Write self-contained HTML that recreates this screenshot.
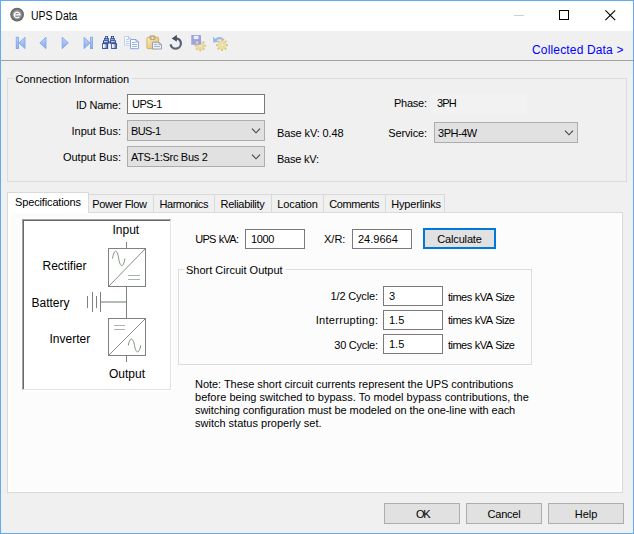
<!DOCTYPE html>
<html><head><meta charset="utf-8"><title>UPS Data</title>
<style>
*{box-sizing:border-box;margin:0;padding:0}
html,body{width:634px;height:534px;overflow:hidden;background:#f0f0f0}
body{position:relative;font-family:"Liberation Sans",sans-serif;font-size:11px;color:#000}
.abs{position:absolute}
.t{position:absolute;white-space:nowrap;line-height:13px;height:13px}
.r{text-align:right}
.inp{position:absolute;background:#fff;border:1px solid #7a7a7a;height:20px;line-height:18px;padding-left:5px;white-space:nowrap}
.cmb{position:absolute;background:#e1e1e1;border:1px solid #adadad;height:21px;line-height:21px;padding-left:3px;white-space:nowrap}
.chev{position:absolute;right:3px;top:7px}
.btn{position:absolute;background:#e1e1e1;border:1px solid #adadad;text-align:center;height:21px;line-height:21px;white-space:nowrap}
.grp{position:absolute;border:1px solid #dcdcdc}
.tab{position:absolute;top:194px;height:18px;border:1px solid #d9d9d9;border-bottom:none;background:#f0f0f0;line-height:19px;white-space:nowrap}
</style></head><body>
<!-- window frame -->
<div class="abs" style="left:0;top:0;width:634px;height:534px;border:1px solid #62aaf2;pointer-events:none;z-index:50"></div>
<!-- title bar -->
<div class="abs" style="left:1px;top:1px;width:632px;height:30px;background:#fff"></div>
<svg class="abs" style="left:9px;top:7px" width="16" height="16" viewBox="0 0 16 16">
<defs><radialGradient id="g1" cx="0.5" cy="0.5" r="0.5"><stop offset="0" stop-color="#8a8a8a"/><stop offset="0.55" stop-color="#9a9a9a"/><stop offset="0.8" stop-color="#6e6e6e"/><stop offset="1" stop-color="#5c5c5c"/></radialGradient></defs>
<circle cx="8.100" cy="7.600" r="6.900" fill="url(#g1)"/>
<path d="M5.200 7.900 H10.900 A2.850 2.750 0 1 0 10.200 9.800" fill="none" stroke="#fff" stroke-width="1.250"/>
</svg>
<div class="t" style="left:31px;top:9px;font-size:12px;line-height:15px;height:15px;transform:scaleX(0.87);transform-origin:0 0">UPS Data</div>
<!-- window controls -->
<div class="abs" style="left:514px;top:15px;width:10px;height:1px;background:#cfcfcf"></div>
<div class="abs" style="left:559px;top:10px;width:10px;height:10px;border:1px solid #000"></div>
<svg class="abs" style="left:605px;top:9.500px" width="11" height="11" viewBox="0 0 11 11"><path d="M0.400 0.400 L10.200 10.200 M10.200 0.400 L0.400 10.200" stroke="#000" stroke-width="1.100" fill="none"/></svg>
<!-- toolbar -->
<div class="abs" style="left:1px;top:60px;width:632px;height:1px;background:#a0a0a0"></div>
<!-- toolbar icons -->
<svg class="abs" style="left:0;top:31px" width="240" height="29" viewBox="0 31 240 29">
<defs>
<linearGradient id="nb" x1="0" y1="0" x2="0" y2="1"><stop offset="0" stop-color="#c0d3f8"/><stop offset="1" stop-color="#88abea"/></linearGradient>
<linearGradient id="undo" gradientUnits="userSpaceOnUse" x1="170" y1="37" x2="182" y2="50"><stop offset="0" stop-color="#3e495c"/><stop offset="1" stop-color="#66728a"/></linearGradient>
<linearGradient id="clip" x1="0" y1="0" x2="1" y2="1"><stop offset="0" stop-color="#faefc6"/><stop offset="1" stop-color="#deb65c"/></linearGradient>
<linearGradient id="bino" x1="0" y1="0" x2="1" y2="0"><stop offset="0" stop-color="#ffffff"/><stop offset="0.3" stop-color="#f4f6fd"/><stop offset="1" stop-color="#4a63b2"/></linearGradient>
</defs>
<!-- first -->
<g fill="url(#nb)" stroke="#7fa3e8" stroke-width="0.8">
<rect x="16.2" y="37.2" width="2.2" height="11.4"/>
<path d="M25 37.2 V48.6 L18.8 42.9 Z"/>
<path d="M46 37.2 V48.6 L39.8 42.9 Z"/>
<path d="M62.2 37.2 V48.6 L68.4 42.9 Z"/>
<path d="M84 37.2 V48.6 L90.2 42.9 Z"/>
<rect x="90.4" y="37.2" width="2.2" height="11.4"/>
</g>
<!-- binoculars -->
<g>
<g fill="#2a4596">
<rect x="105.100" y="36" width="2.800" height="2.300"/>
<rect x="104" y="38.100" width="4.800" height="2.300"/>
<rect x="103" y="40.250" width="5.900" height="3"/>
<rect x="102.100" y="43.100" width="6" height="5.800"/>
<rect x="111" y="36" width="3" height="2.300"/>
<rect x="110.300" y="38.100" width="4.500" height="2.300"/>
<rect x="110.100" y="40.250" width="5.800" height="3"/>
<rect x="111.100" y="43.100" width="5.800" height="5.800"/>
<rect x="108.100" y="41.400" width="3" height="2.100"/>
</g>
<rect x="102.900" y="44.100" width="4.300" height="3.800" fill="url(#bino)"/>
<rect x="111.900" y="44.100" width="4.200" height="3.800" fill="url(#bino)"/>
<rect x="104" y="41.200" width="3.700" height="1.100" fill="#e6ecfb"/>
<rect x="111" y="41.200" width="3.700" height="1.100" fill="#e6ecfb"/>
<rect x="104.700" y="38.900" width="3.100" height="0.800" fill="#b5c3ee"/>
<rect x="111" y="38.900" width="3.100" height="0.800" fill="#b5c3ee"/>
<rect x="105.900" y="36.800" width="1.100" height="1.100" fill="#f0f3fc"/>
<rect x="112" y="36.800" width="1.100" height="1.100" fill="#f0f3fc"/>
<rect x="109.300" y="42" width="0.800" height="0.900" fill="#9db0e6"/>
</g>
<!-- copy -->
<path d="M124.500 36.500 h4 l2 2 v6.700 h-6z" fill="#fdfdff" stroke="#c3cfea" stroke-width="1"/>
<path d="M128.500 36.500 v2 h2" fill="none" stroke="#aebcdc" stroke-width="0.800"/>
<path d="M126 39.400 h3 M126 41.400 h3.500 M126 43.400 h3.500" stroke="#b4c8f0" stroke-width="1"/>
<path d="M130.500 39.500 h5.500 l2.500 2.500 v6.700 h-8z" fill="#fbfcff" stroke="#8fa4d8" stroke-width="1"/>
<path d="M136 39.500 v2.500 h2.500" fill="none" stroke="#7f97d0" stroke-width="0.800"/>
<path d="M132 42.500 h3.500 M132 44.500 h5 M132 46.500 h5" stroke="#96b2ea" stroke-width="1"/>
<!-- paste -->
<rect x="146.900" y="37.300" width="11.700" height="11.400" rx="1" fill="url(#clip)" stroke="#cdae62" stroke-width="0.900"/>
<rect x="149.800" y="35.800" width="5.300" height="3.700" rx="1" fill="#cdbd92" stroke="#b09a62" stroke-width="0.700"/>
<rect x="151.800" y="37.400" width="1.400" height="1.300" fill="#fff"/>
<path d="M152.500 42.300 h6.500 l2.500 2.300 v4.400 h-9z" fill="#edf0f6" stroke="#8e98ac" stroke-width="0.900"/>
<path d="M159 42.300 v2.300 h2.500" fill="none" stroke="#8e98ac" stroke-width="0.700"/>
<path d="M154 44.500 h3.500 M154 46.500 h6" stroke="#a3adc2" stroke-width="0.900"/>
<!-- undo -->
<path d="M175.700 38.300 A5.200 5.200 0 1 1 170.600 44.400" fill="none" stroke="url(#undo)" stroke-width="2.300"/>
<path d="M171.700 38.400 L176.900 34.800 L176.900 41.800 Z" fill="#465164"/>
<!-- save + gear -->
<g stroke="#dcc87c" stroke-width="2" stroke-linecap="butt"><path d="M203.30 45.70 L205.90 45.70"/><path d="M202.39 47.89 L204.23 49.73"/><path d="M200.20 48.80 L200.20 51.40"/><path d="M198.01 47.89 L196.17 49.73"/><path d="M197.10 45.70 L194.50 45.70"/><path d="M198.01 43.51 L196.17 41.67"/><path d="M200.20 42.60 L200.20 40.00"/><path d="M202.39 43.51 L204.23 41.67"/></g><circle cx="200.2" cy="45.7" r="3.9" fill="#ecdfa6" stroke="#e0cf8c" stroke-width="0.500"/><circle cx="200.2" cy="45.7" r="1.4" fill="#f2f0e6" stroke="#d8c680" stroke-width="0.400"/>
<rect x="191" y="35" width="10" height="9.800" rx="0.800" fill="#9d9fe0"/>
<rect x="191" y="35" width="1.200" height="9.800" fill="#b4b6ea"/>
<rect x="193.800" y="35.800" width="4.700" height="3.300" fill="#eef0fc"/>
<rect x="194.100" y="41" width="4.700" height="3.100" fill="#a9aec0"/>
<rect x="196.400" y="41.600" width="1.600" height="1.900" fill="#dfe2ea"/>
<!-- undo gear -->
<path d="M215.200 41.300 A4.700 4.700 0 0 1 223.600 40.300" fill="none" stroke="#97baf0" stroke-width="2.300"/>
<path d="M213 36.700 L213.200 42.700 L218.600 41.700 Z" fill="#97baf0"/>
<g stroke="#dcc87c" stroke-width="2" stroke-linecap="butt"><path d="M225.30 45.10 L228.00 45.10"/><path d="M224.33 47.43 L226.24 49.34"/><path d="M222.00 48.40 L222.00 51.10"/><path d="M219.67 47.43 L217.76 49.34"/><path d="M218.70 45.10 L216.00 45.10"/><path d="M219.67 42.77 L217.76 40.86"/><path d="M222.00 41.80 L222.00 39.10"/><path d="M224.33 42.77 L226.24 40.86"/></g><circle cx="222" cy="45.1" r="4.1" fill="#ecdfa6" stroke="#e0cf8c" stroke-width="0.500"/><circle cx="222" cy="45.1" r="1.5" fill="#f2f0e6" stroke="#d8c680" stroke-width="0.400"/>
</svg>

<div class="t" style="left:532px;top:43px;font-size:12px;line-height:14px;height:14px;color:#0000ff;letter-spacing:0.16px">Collected Data &gt;</div>

<!-- Connection Information group -->
<div class="grp" style="left:7px;top:78px;width:620px;height:104px"></div>
<div class="t" style="left:12.5px;top:73px;background:#f0f0f0;padding:0 3px">Connection Information</div>
<div class="t r" style="left:40px;width:80.800px;top:99px;letter-spacing:-0.2px">ID Name:</div>
<div class="inp" style="left:127px;top:94px;width:138px;padding-left:4px;letter-spacing:-0.50px">UPS-1</div>
<div class="t r" style="left:40px;width:81px;top:125px">Input Bus:</div>
<div class="cmb" style="left:127px;top:120px;width:138px;letter-spacing:-0.60px">BUS-1<svg class="chev" width="10" height="6" viewBox="0 0 10 6"><path d="M1 0.600 L5 4.800 L9 0.600" fill="none" stroke="#404040" stroke-width="1.100"/></svg></div>
<div class="t r" style="left:40px;width:81px;top:151px">Output Bus:</div>
<div class="cmb" style="left:127px;top:146px;width:138px;letter-spacing:-0.31px">ATS-1:Src Bus 2<svg class="chev" width="10" height="6" viewBox="0 0 10 6"><path d="M1 0.600 L5 4.800 L9 0.600" fill="none" stroke="#404040" stroke-width="1.100"/></svg></div>
<div class="t" style="left:277px;top:127px;letter-spacing:-0.12px">Base kV: 0.48</div>
<div class="t" style="left:277px;top:153px;letter-spacing:-0.23px">Base kV:</div>
<div class="abs" style="left:431px;top:94px;width:96px;height:20px;background:#f2f2f2"></div>
<div class="t" style="left:394px;top:97px;letter-spacing:-0.25px">Phase:</div>
<div class="t" style="left:437px;top:97px;letter-spacing:-0.90px">3PH</div>
<div class="t" style="left:388.300px;top:127px;letter-spacing:-0.14px">Service:</div>
<div class="cmb" style="left:434px;top:122px;width:144px;letter-spacing:-0.48px">3PH-4W<svg class="chev" width="10" height="6" viewBox="0 0 10 6"><path d="M1 0.600 L5 4.800 L9 0.600" fill="none" stroke="#404040" stroke-width="1.100"/></svg></div>

<!-- tab panel -->
<div class="abs" style="left:7px;top:212px;width:616px;height:281px;background:#fff;border:1px solid #d9d9d9"></div>
<div class="abs" style="left:10px;top:214px;width:610px;height:276px;background:#fcfcfd"></div>
<div class="tab" style="left:88px;width:66px;padding-left:3.200px;letter-spacing:-0.29px">Power Flow</div>
<div class="tab" style="left:153px;width:62px;padding-left:5.5px;letter-spacing:-0.46px">Harmonics</div>
<div class="tab" style="left:214px;width:58px;padding-left:5.5px;letter-spacing:-0.28px">Reliability</div>
<div class="tab" style="left:271px;width:53px;padding-left:5.3px;letter-spacing:-0.13px">Location</div>
<div class="tab" style="left:323px;width:63px;padding-left:5.3px;letter-spacing:-0.44px">Comments</div>
<div class="tab" style="left:385px;width:60px;padding-left:5.2px;letter-spacing:-0.17px">Hyperlinks</div>
<div class="tab" style="left:7px;top:192px;width:82px;height:21px;background:#fff;padding-left:7px;line-height:19px;letter-spacing:-0.14px">Specifications</div>

<!-- diagram -->
<div class="abs" style="left:21px;top:218px;width:151px;height:173px;background:#fff"></div>
<div class="abs" style="left:22px;top:219px;width:149px;height:171px;background:#fff;border:1px solid #a0a0a0;border-right:1px solid #e3e3e3;border-bottom:1px solid #e3e3e3"></div>
<div class="abs" style="left:23px;top:220px;width:147px;height:169px;border-left:1px solid #696969;border-top:1px solid #696969"></div>
<svg class="abs" style="left:24px;top:221px" width="146" height="168" viewBox="24 221 146 168" shape-rendering="crispEdges">
<g stroke="#808080" stroke-width="1" fill="none">
<path d="M126.5 242 V248 M126.5 287 V318 M126.5 356 V362"/>
<rect x="108.5" y="248.5" width="37" height="38" fill="#fff"/>
<rect x="108.5" y="318.5" width="37" height="37" fill="#fff"/>
<path d="M87.5 296 V308 M92.5 292 V312 M96.5 296 V308 M100.5 292 V312"/>
</g>
<g stroke="#869086" stroke-width="1" fill="none" shape-rendering="auto">
<path d="M108.5 286.5 L145.5 248.5 M108.5 355.5 L145.5 318.5"/>
</g>
<g stroke="#7f8f7f" stroke-width="1" fill="none" shape-rendering="auto">
<path d="M112.500 258.500 C114 248.900 117.200 248.900 118.700 258.500 C120.200 268.100 123.400 268.100 124.900 258.500"/>
<path d="M128.300 345.500 C129.800 337 133 337 134.500 345.500 C136 354 139.200 354 140.700 345.500"/>
</g>
<g stroke="#a9b5a9" stroke-width="1" fill="none">
<path d="M128 275.500 H140 M128 279.500 H140"/>
<path d="M114 325.500 H125 M114 329.500 H125"/>
<path d="M101 302 H126" stroke-width="2" stroke="#b4bcb4"/>
</g>
<g font-family="Liberation Sans, sans-serif" font-size="12" fill="#000">
<text x="112.500" y="234">Input</text>
<text x="42.500" y="269.500">Rectifier</text>
<text x="31.500" y="307">Battery</text>
<text x="49.500" y="343">Inverter</text>
<text x="109" y="378">Output</text>
</g>
</svg>

<!-- spec fields -->
<div class="t r" style="left:180px;width:58.300px;top:233px;letter-spacing:-0.72px;word-spacing:0.8px">UPS kVA:</div>
<div class="inp" style="left:245px;top:229px;width:60px;height:20px;letter-spacing:-0.33px">1000</div>
<div class="t" style="left:324px;top:233px">X/R:</div>
<div class="inp" style="left:352px;top:229px;width:60px;height:20px">24.9664</div>
<div class="btn" style="left:423px;top:228px;width:73px;height:21px;border:2px solid #0078d7;line-height:19px;letter-spacing:-0.17px">Calculate</div>

<div class="grp" style="left:178px;top:269px;width:354px;height:96px"></div>
<div class="t" style="left:184px;top:264px;background:#fcfcfd;padding:0 3px 0 2px">Short Circuit Output</div>
<div class="t r" style="left:300px;width:77.800px;top:290px;letter-spacing:-0.17px">1/2 Cycle:</div>
<div class="inp" style="left:383px;top:286px;width:60px">3</div>
<div class="t" style="left:448px;top:291px;letter-spacing:-0.52px;word-spacing:0.6px">times kVA Size</div>
<div class="t r" style="left:300px;width:78.300px;top:314px;letter-spacing:0.3px">Interrupting:</div>
<div class="inp" style="left:383px;top:310px;width:60px">1.5</div>
<div class="t" style="left:448px;top:314px;letter-spacing:-0.52px;word-spacing:0.6px">times kVA Size</div>
<div class="t r" style="left:300px;width:77.700px;top:339px;letter-spacing:-0.28px">30 Cycle:</div>
<div class="inp" style="left:383px;top:334px;width:60px">1.5</div>
<div class="t" style="left:448px;top:339px;letter-spacing:-0.52px;word-spacing:0.6px">times kVA Size</div>

<div class="t" style="left:195px;top:378px;letter-spacing:-0.04px">Note: These short circuit currents represent the UPS contributions</div>
<div class="t" style="left:195px;top:391px;letter-spacing:0.02px">before being switched to bypass. To model bypass contributions, the</div>
<div class="t" style="left:195px;top:404px;letter-spacing:-0.06px">switching configuration must be modeled on the one-line with each</div>
<div class="t" style="left:195px;top:417px">switch status properly set.</div>

<!-- bottom buttons -->
<div class="btn" style="left:384px;top:503px;width:76px;letter-spacing:-1.3px;padding-left:1.3px">OK</div>
<div class="btn" style="left:466px;top:503px;width:76px;letter-spacing:-0.20px">Cancel</div>
<div class="btn" style="left:548px;top:503px;width:76px">Help</div>
</body></html>
